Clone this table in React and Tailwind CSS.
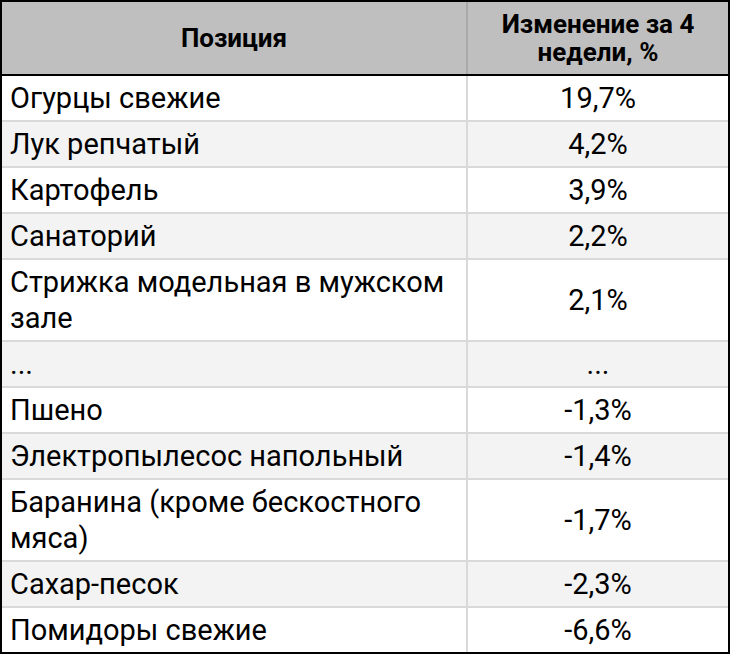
import React from 'react';

const rows = [
  { name: 'Огурцы свежие', value: '19,7%' },
  { name: 'Лук репчатый', value: '4,2%' },
  { name: 'Картофель', value: '3,9%' },
  { name: 'Санаторий', value: '2,2%' },
  { name: 'Стрижка модельная в мужском зале', value: '2,1%' },
  { name: '...', value: '...' },
  { name: 'Пшено', value: '-1,3%' },
  { name: 'Электропылесос напольный', value: '-1,4%' },
  { name: 'Баранина (кроме бескостного мяса)', value: '-1,7%' },
  { name: 'Сахар-песок', value: '-2,3%' },
  { name: 'Помидоры свежие', value: '-6,6%' },
];

export default function App() {
  return (
    <div className="w-[730px] h-[654px] bg-white text-black font-['Roboto',sans-serif]">
      <div className="border-2 border-black">
        {/* Header */}
        <div className="flex bg-[#bfbfbf] border-b-2 border-black font-bold text-[26px] leading-[28px]">
          <div className="w-[466px] shrink-0 border-r-2 border-[#a9a9a9] flex items-center justify-center py-2">
            Позиция
          </div>
          <div className="flex-1 flex items-center justify-center text-center py-2 px-3">
            Изменение за 4 недели, %
          </div>
        </div>

        {/* Rows */}
        {rows.map((row, i) => (
          <div
            key={i}
            className={`flex text-[29px] leading-[36px] ${i > 0 ? 'border-t-2 border-[#d9d9d9]' : ''} ${i % 2 === 1 ? 'bg-[#f3f3f3]' : 'bg-white'}`}
          >
            <div className="w-[466px] shrink-0 border-r-2 border-[#d9d9d9] pl-2 pr-3 py-1">
              {row.name}
            </div>
            <div className="flex-1 flex items-center justify-center py-1">
              {row.value}
            </div>
          </div>
        ))}
      </div>
    </div>
  );
}
